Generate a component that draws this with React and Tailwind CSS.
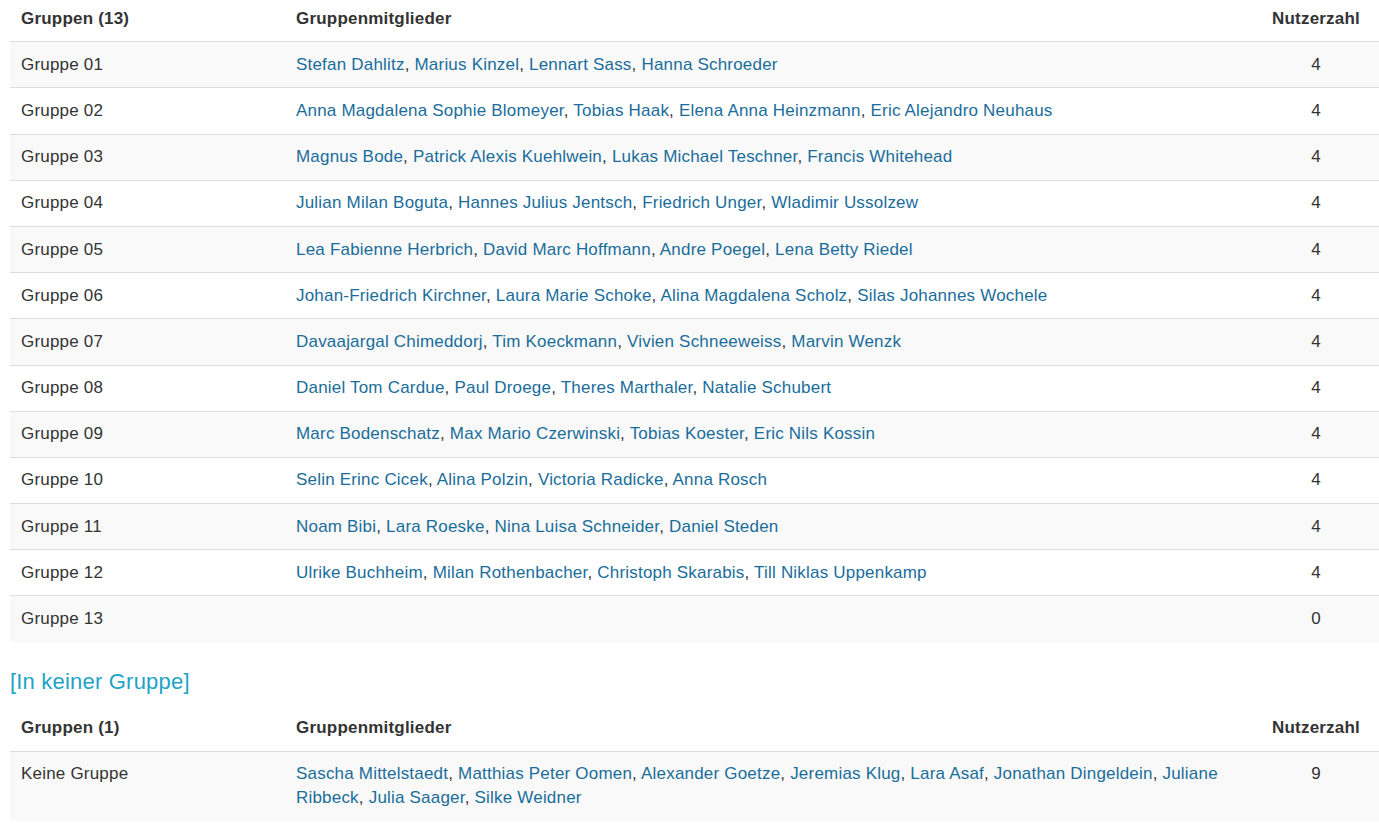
import React from 'react';

const groups = [
  ['Gruppe 01', ['Stefan Dahlitz', 'Marius Kinzel', 'Lennart Sass', 'Hanna Schroeder']],
  ['Gruppe 02', ['Anna Magdalena Sophie Blomeyer', 'Tobias Haak', 'Elena Anna Heinzmann', 'Eric Alejandro Neuhaus']],
  ['Gruppe 03', ['Magnus Bode', 'Patrick Alexis Kuehlwein', 'Lukas Michael Teschner', 'Francis Whitehead']],
  ['Gruppe 04', ['Julian Milan Boguta', 'Hannes Julius Jentsch', 'Friedrich Unger', 'Wladimir Ussolzew']],
  ['Gruppe 05', ['Lea Fabienne Herbrich', 'David Marc Hoffmann', 'Andre Poegel', 'Lena Betty Riedel']],
  ['Gruppe 06', ['Johan-Friedrich Kirchner', 'Laura Marie Schoke', 'Alina Magdalena Scholz', 'Silas Johannes Wochele']],
  ['Gruppe 07', ['Davaajargal Chimeddorj', 'Tim Koeckmann', 'Vivien Schneeweiss', 'Marvin Wenzk']],
  ['Gruppe 08', ['Daniel Tom Cardue', 'Paul Droege', 'Theres Marthaler', 'Natalie Schubert']],
  ['Gruppe 09', ['Marc Bodenschatz', 'Max Mario Czerwinski', 'Tobias Koester', 'Eric Nils Kossin']],
  ['Gruppe 10', ['Selin Erinc Cicek', 'Alina Polzin', 'Victoria Radicke', 'Anna Rosch']],
  ['Gruppe 11', ['Noam Bibi', 'Lara Roeske', 'Nina Luisa Schneider', 'Daniel Steden']],
  ['Gruppe 12', ['Ulrike Buchheim', 'Milan Rothenbacher', 'Christoph Skarabis', 'Till Niklas Uppenkamp']],
  ['Gruppe 13', []],
];

const ungrouped = [
  ['Keine Gruppe', ['Sascha Mittelstaedt', 'Matthias Peter Oomen', 'Alexander Goetze', 'Jeremias Klug', 'Lara Asaf', 'Jonathan Dingeldein', 'Juliane Ribbeck', 'Julia Saager', 'Silke Weidner']],
];

const GroupTable = ({ rows, label }) => (
  <table className="w-[1369px] border-collapse table-fixed">
    <colgroup>
      <col className="w-[275px]" />
      <col className="w-[968px]" />
      <col className="w-[126px]" />
    </colgroup>
    <thead>
      <tr className="border-b border-[#dddddd]">
        <th className="px-[11px] py-[10.6px] text-left font-bold">{label}</th>
        <th className="px-[11px] py-[10.6px] text-left font-bold">Gruppenmitglieder</th>
        <th className="px-[11px] py-[10.6px] text-center font-bold">Nutzerzahl</th>
      </tr>
    </thead>
    <tbody>
      {rows.map(([name, members], i) => (
        <tr key={name} className={`border-t border-[#dddddd] first:border-t-0 ${i % 2 === 0 ? 'bg-[#f9f9f9]' : 'bg-white'}`}>
          <td className="px-[11px] py-[10.6px] align-top">{name}</td>
          <td className="px-[11px] py-[10.6px] align-top">
            {members.map((m, j) => (
              <React.Fragment key={m}>
                <a href="#" className="text-[#1a6d9b]">{m}</a>
                {j < members.length - 1 && ', '}
              </React.Fragment>
            ))}
          </td>
          <td className="px-[11px] py-[10.6px] text-center align-top">{members.length}</td>
        </tr>
      ))}
    </tbody>
  </table>
);

export default function App() {
  return (
    <div className="min-h-screen bg-white pl-[10px] text-[17px] leading-[24px] tracking-[0.2px] text-[#333333] font-['Liberation_Sans',Arial,sans-serif] overflow-hidden">
      <div className="-mt-[4px]">
        <GroupTable rows={groups} label="Gruppen (13)" />
      </div>
      <h3 className="mt-[27px] mb-[11px] text-[22px] leading-[26px] tracking-[0.2px] text-[#1fa3c7]">[In keiner Gruppe]</h3>
      <GroupTable rows={ungrouped} label="Gruppen (1)" />
    </div>
  );
}
